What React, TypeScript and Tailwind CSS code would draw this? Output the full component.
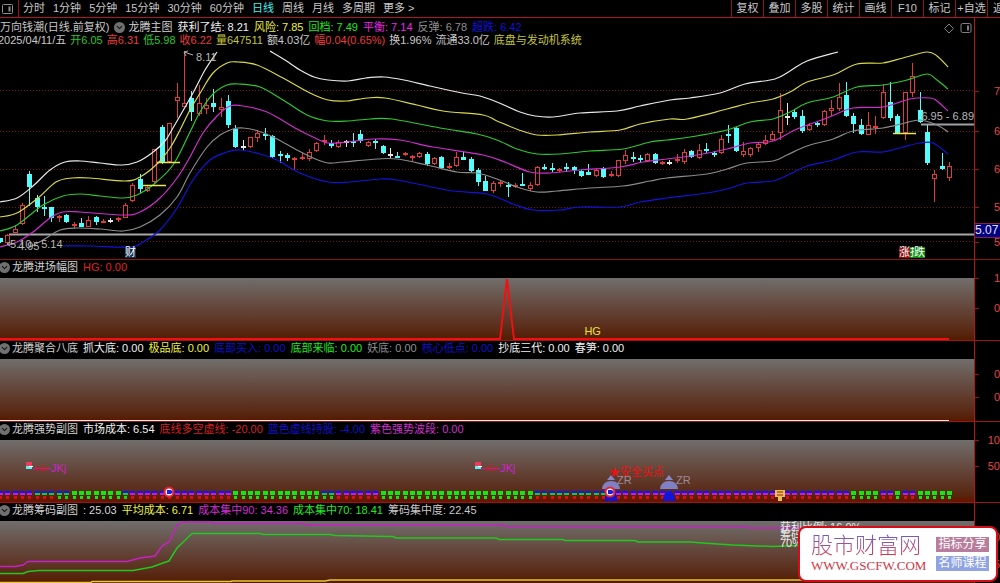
import { useState } from "react";
import { FiChevronDown } from "react-icons/fi";

type Point = [number, number];
// colour, high, body top, body bottom, low
type Candle = [string, number, number, number, number];

interface Item {
    text: string;
    color: string;
}

interface Tick {
    text: string;
    top: number;
}

const periods = ["分时", "1分钟", "5分钟", "15分钟", "30分钟", "60分钟", "日线", "周线", "月线", "多周期", "更多 >"];
const tools = ["复权", "叠加", "多股", "统计", "画线", "F10", "标记", "+自选"];

const STEP = 7.356;

const colors: Record<string, string> = { r: "#e03c3c", c: "#54fcfc", w: "#e8e8e8" };

const candles: Candle[] = [
    ["c", 238, 238, 242, 243], ["r", 234, 235, 243, 244], ["r", 225, 229, 233, 233], ["r", 203, 205, 224, 225],
    ["c", 171, 174, 187, 206], ["c", 195, 198, 207, 212], ["c", 196, 207, 208, 216], ["c", 207, 207, 218, 222],
    ["r", 215, 216, 218, 222], ["c", 214, 215, 222, 223], ["r", 222, 224, 226, 228], ["c", 218, 223, 227, 227],
    ["r", 216, 220, 227, 227], ["c", 216, 217, 222, 225], ["r", 219, 221, 223, 223], ["w", 218, 220, 221, 223],
    ["r", 217, 218, 220, 222], ["r", 203, 205, 218, 218], ["r", 183, 185, 201, 202], ["c", 174, 179, 189, 193],
    ["r", 186, 187, 191, 192], ["r", 149, 149, 182, 183], ["c", 125, 127, 162, 164], ["r", 123, 123, 162, 163],
    ["r", 83, 97, 101, 118], ["r", 51, 103, 107, 107], ["c", 91, 98, 112, 121], ["r", 85, 103, 114, 116],
    ["r", 98, 105, 109, 114], ["c", 89, 103, 107, 112], ["r", 98, 107, 110, 117], ["c", 95, 101, 125, 128],
    ["c", 125, 129, 147, 148], ["w", 140, 146, 147, 150], ["r", 137, 137, 147, 148], ["r", 130, 133, 138, 142],
    ["c", 128, 134, 135, 140], ["c", 135, 136, 157, 158], ["c", 151, 154, 156, 163], ["c", 153, 155, 158, 161],
    ["r", 157, 158, 160, 170], ["r", 153, 157, 159, 160], ["r", 149, 152, 159, 161], ["r", 142, 143, 151, 152],
    ["r", 135, 140, 142, 145], ["c", 140, 143, 146, 148], ["r", 140, 142, 147, 148], ["w", 140, 141, 142, 147],
    ["c", 133, 141, 143, 147], ["c", 130, 134, 141, 143], ["r", 141, 142, 146, 147], ["c", 139, 141, 143, 149],
    ["c", 145, 146, 153, 154], ["w", 148, 154, 155, 158], ["c", 152, 156, 157, 158], ["r", 152, 153, 155, 156],
    ["r", 155, 156, 158, 162], ["r", 152, 153, 157, 158], ["c", 152, 154, 164, 166], ["r", 157, 158, 164, 165],
    ["c", 156, 157, 168, 169], ["r", 163, 166, 168, 169], ["r", 152, 157, 166, 167], ["c", 152, 157, 160, 160],
    ["c", 157, 159, 171, 172], ["c", 168, 170, 182, 186], ["c", 176, 181, 191, 191], ["r", 181, 183, 191, 193],
    ["r", 180, 182, 184, 187], ["c", 182, 185, 187, 197], ["r", 183, 185, 186, 188], ["c", 173, 184, 186, 186],
    ["r", 182, 185, 189, 191], ["r", 166, 167, 185, 186], ["c", 164, 167, 169, 170], ["c", 163, 168, 170, 172],
    ["r", 168, 169, 171, 172], ["c", 163, 167, 169, 171], ["c", 166, 167, 170, 174], ["c", 170, 171, 176, 177],
    ["c", 164, 172, 175, 175], ["r", 169, 170, 176, 177], ["c", 167, 168, 177, 178], ["r", 171, 174, 176, 177],
    ["r", 160, 160, 176, 177], ["r", 150, 155, 161, 164], ["c", 152, 157, 158, 162], ["c", 155, 158, 159, 162],
    ["r", 153, 154, 161, 162], ["c", 153, 154, 163, 164], ["r", 161, 162, 164, 165], ["w", 160, 162, 163, 165],
    ["r", 154, 159, 161, 163], ["r", 149, 152, 162, 164], ["c", 150, 151, 157, 158], ["r", 144, 150, 158, 159],
    ["c", 143, 149, 150, 153], ["c", 151, 153, 154, 157], ["r", 135, 139, 153, 154], ["c", 125, 134, 135, 143],
    ["c", 127, 128, 151, 152], ["r", 142, 151, 155, 157], ["r", 147, 148, 155, 157], ["r", 142, 144, 148, 152],
    ["r", 135, 140, 144, 145], ["r", 131, 134, 140, 141], ["r", 93, 110, 133, 140], ["w", 103, 116, 117, 125],
    ["c", 109, 112, 117, 119], ["c", 110, 116, 131, 133], ["r", 123, 125, 130, 131], ["c", 122, 123, 125, 127],
    ["r", 110, 111, 125, 126], ["r", 100, 108, 111, 116], ["r", 83, 97, 109, 111], ["c", 82, 95, 116, 117],
    ["c", 113, 116, 124, 133], ["c", 119, 125, 134, 135], ["r", 112, 125, 135, 135], ["r", 116, 126, 128, 134],
    ["r", 84, 92, 118, 119], ["c", 82, 102, 118, 121], ["c", 114, 116, 133, 134], ["r", 92, 92, 133, 140],
    ["r", 63, 76, 93, 97], ["c", 92, 110, 122, 123], ["c", 125, 132, 163, 165], ["r", 170, 174, 179, 202],
    ["c", 153, 166, 169, 170], ["r", 162, 166, 178, 181],
];

const bands: { color: string; points: Point[] }[] = [
    {
        color: "#e8e8e8",
        points: [[0, 202], [17, 198], [33, 186], [50, 170], [65, 162], [80, 161], [100, 163], [122, 165], [137, 162], [152, 153], [165, 141], [173, 128], [193, 93], [205, 70], [217, 52]],
    },
    {
        color: "#e8e8e8",
        points: [[270, 51], [285, 60], [300, 70], [314, 77], [328, 80], [348, 81], [366, 78], [384, 77], [404, 80], [430, 86], [462, 93], [480, 96], [497, 102], [520, 112], [535, 116], [553, 117], [580, 113], [617, 111], [640, 106], [670, 100], [690, 98], [720, 93], [745, 84], [775, 79], [790, 71], [807, 61], [838, 52]],
    },
    {
        color: "#d8d84a",
        points: [[0, 217], [17, 213], [38, 198], [56, 182], [72, 178], [90, 178], [125, 181], [140, 177], [157, 164], [170, 148], [180, 130], [190, 110], [202, 90], [213, 73], [227, 63], [238, 62], [257, 65], [283, 78], [310, 93], [328, 100], [347, 101], [367, 98], [385, 98], [417, 105], [443, 111], [483, 115], [497, 121], [522, 131], [537, 135], [557, 135], [590, 132], [620, 130], [640, 124], [670, 119], [687, 119], [727, 109], [750, 103], [773, 99], [790, 92], [807, 82], [833, 75], [857, 64], [883, 63], [903, 58], [927, 52], [937, 56], [948, 67]],
    },
    {
        color: "#2fc82f",
        points: [[0, 231], [17, 225], [43, 205], [63, 196], [80, 194], [100, 196], [123, 198], [137, 195], [153, 185], [173, 165], [190, 132], [200, 112], [213, 94], [227, 85], [238, 84], [260, 87], [283, 100], [307, 115], [328, 121], [348, 121], [370, 119], [392, 119], [440, 128], [477, 134], [497, 140], [517, 149], [537, 154], [560, 154], [590, 151], [623, 149], [650, 142], [667, 140], [690, 137], [727, 130], [750, 122], [773, 119], [790, 112], [807, 103], [833, 97], [857, 87], [883, 85], [907, 80], [927, 74], [937, 80], [948, 89]],
    },
    {
        color: "#d02fd0",
        points: [[0, 247], [17, 242], [33, 232], [50, 218], [63, 212], [80, 212], [123, 215], [140, 212], [160, 198], [177, 178], [190, 157], [203, 133], [217, 116], [230, 106], [243, 106], [267, 112], [297, 129], [313, 137], [328, 143], [347, 142], [373, 139], [400, 140], [433, 147], [483, 155], [507, 163], [530, 172], [550, 173], [580, 170], [620, 167], [643, 162], [667, 159], [697, 155], [727, 149], [750, 143], [773, 141], [797, 129], [827, 118], [853, 108], [883, 107], [910, 99], [930, 98], [937, 101], [948, 111]],
    },
    {
        color: "#8a8a8a",
        points: [[30, 247], [43, 240], [60, 230], [77, 228], [100, 229], [123, 231], [140, 227], [160, 215], [177, 197], [190, 173], [207, 147], [220, 135], [233, 129], [243, 128], [255, 130], [273, 137], [297, 150], [313, 158], [328, 163], [343, 162], [377, 159], [397, 159], [427, 165], [457, 172], [477, 173], [497, 179], [517, 187], [537, 192], [557, 191], [590, 188], [623, 186], [650, 181], [667, 178], [707, 174], [727, 169], [747, 163], [773, 161], [787, 155], [807, 146], [833, 139], [853, 131], [883, 128], [905, 123], [920, 120], [937, 125], [948, 132]],
    },
    {
        color: "#1414d8",
        points: [[63, 246], [90, 246], [130, 247], [143, 242], [160, 230], [177, 208], [193, 180], [210, 160], [227, 152], [240, 150], [260, 154], [277, 160], [300, 173], [328, 182], [350, 182], [380, 179], [397, 180], [427, 186], [453, 191], [487, 194], [513, 204], [533, 210], [560, 210], [580, 207], [620, 207], [640, 202], [667, 198], [707, 193], [727, 189], [747, 183], [773, 181], [790, 174], [807, 166], [833, 160], [857, 152], [883, 152], [903, 147], [920, 143], [933, 143], [948, 154]],
    },
];

const quoteTop: Item[] = [
    { text: "获利了结: 8.21", color: "text-[#f0f0f0]" },
    { text: "风险: 7.85", color: "text-[#f0f040]" },
    { text: "回档: 7.49", color: "text-[#20e820]" },
    { text: "平衡: 7.14", color: "text-[#e828e8]" },
    { text: "反弹: 6.78", color: "text-[#909090]" },
    { text: "超跌: 6.42", color: "text-[#1010d8]" },
];

const quoteBottom: Item[] = [
    { text: "2025/04/11/五", color: "text-[#c8c8c8]" },
    { text: "开6.05", color: "text-[#28c828]" },
    { text: "高6.31", color: "text-[#e83c3c]" },
    { text: "低5.98", color: "text-[#28c828]" },
    { text: "收6.22", color: "text-[#e83c3c]" },
    { text: "量647511", color: "text-[#c4c43c]" },
    { text: "额4.03亿", color: "text-[#c8c8c8]" },
    { text: "幅0.04(0.65%)", color: "text-[#e83c3c]" },
    { text: "换1.96%", color: "text-[#c8c8c8]" },
    { text: "流通33.0亿", color: "text-[#c8c8c8]" },
    { text: "底盘与发动机系统", color: "text-[#c4c43c]" },
];

const bottomItems: Item[] = [
    { text: "抓大底: 0.00", color: "text-[#f0f0f0]" },
    { text: "极品底: 0.00", color: "text-[#f0f040]" },
    { text: "底部买入: 0.00", color: "text-[#1010c8]" },
    { text: "底部来临: 0.00", color: "text-[#20e820]" },
    { text: "妖底: 0.00", color: "text-[#909090]" },
    { text: "核心低点: 0.00", color: "text-[#1010c8]" },
    { text: "抄底三代: 0.00", color: "text-[#f0f0f0]" },
    { text: "春笋: 0.00", color: "text-[#f0f0f0]" },
];

const strongItems: Item[] = [
    { text: "市场成本: 6.54", color: "text-[#f0f0f0]" },
    { text: "底线多空虚线: -20.00", color: "text-[#d82020]" },
    { text: "蓝色虚线持股: -4.00", color: "text-[#1010c8]" },
    { text: "紫色强势波段: 0.00", color: "text-[#d030d0]" },
];

const chipItems: Item[] = [
    { text: ": 25.03", color: "text-[#d8d8d8]" },
    { text: "平均成本: 6.71", color: "text-[#f0f040]" },
    { text: "成本集中90: 34.36", color: "text-[#d030d0]" },
    { text: "成本集中70: 18.41", color: "text-[#20e820]" },
    { text: "筹码集中度: 22.45", color: "text-[#c8c8c8]" },
];

// m = magenta over red, g = green over red, h = blue over green, G = green
const signals = (
    "mmmmmgggh" + "hGGGGGGGh" + "mmmmmmmmmmmmmm" + "GGGGGGGGGGGG" + "hhmmmmmm" +
    "GGGGGGGGGGGGGGGGGGGGG" + "ggggggggggg" + "mmmmmmmmmmmmmmmmmmmmmmmmmmmmmmmm" + "GGGGmmGmmGGGGG"
).split("");

// Catmull-Rom spline through the points
const smooth = (p: Point[]) => {
    let d = `M${p[0][0]} ${p[0][1]}`;
    for (let i = 0; i < p.length - 1; i++) {
        const a = p[i - 1] || p[i];
        const b = p[i];
        const c = p[i + 1];
        const e = p[i + 2] || c;
        d += `C${b[0] + (c[0] - a[0]) / 6} ${b[1] + (c[1] - a[1]) / 6} ${c[0] - (e[0] - b[0]) / 6} ${c[1] - (e[1] - b[1]) / 6} ${c[0]} ${c[1]}`;
    }
    return d;
};

const Chevron = () => (
    <button type="button" aria-label="指标菜单" className="flex size-[11px] shrink-0 items-center justify-center rounded-full bg-[#707070] text-[#181818]">
        <FiChevronDown size={9} strokeWidth={3} />
    </button>
);

const Items = ({ items }: { items: Item[] }) => (
    <>
        {items.map((item) => (
            <span key={item.text} className={item.color}>{item.text}</span>
        ))}
    </>
);

const Axis = ({ ticks, tag }: { ticks: Tick[]; tag?: Tick }) => (
    <div className="relative w-[26px] shrink-0 overflow-hidden border-l border-[#b01818] text-[#e04848]">
        {ticks.map((t) => (
            <div key={t.top} className="absolute inset-x-0 flex h-3 items-center justify-between" style={{ top: t.top - 6 }}>
                <i className="h-px w-1 bg-[#901818]" />
                <span>{t.text}</span>
            </div>
        ))}
        {tag && (
            <div className="absolute inset-x-0 h-[15px] border-y border-[#8c1c50] bg-[#000084] text-[12px] leading-[13px] text-[#e0e0e0]" style={{ top: tag.top - 7 }}>
                {tag.text}
            </div>
        )}
    </div>
);

interface PanelProps {
    title: string;
    items: Item[];
    ticks: Tick[];
    children: React.ReactNode;
}

const Panel = ({ title, items, ticks, children }: PanelProps) => (
    <section className="flex border-b border-[#a01414]">
        <div className="min-w-0 flex-1">
            <header className="flex h-[18px] items-center gap-[5px] overflow-hidden pb-[3px]">
                <div className="-ml-px flex items-center gap-0.5">
                    <Chevron />
                    <h2 className="text-[#d0d0d0]">{title}</h2>
                </div>
                <Items items={items} />
            </header>
            <div className="relative h-[62px] overflow-hidden bg-linear-to-b from-[#706e6c] via-[#634438] to-[#541b00]">{children}</div>
        </div>
        <Axis ticks={ticks} />
    </section>
);

const MainChart = () => (
    <div className="relative h-[213px] overflow-hidden">
        <svg viewBox="0 46 974 213" preserveAspectRatio="none" className="block h-full w-full">
            {[90, 131, 169, 207, 241].map((y) => (
                <path key={y} d={`M0 ${y + 0.5}H974`} stroke="#781818" strokeDasharray="1 2" />
            ))}
            <path d="M9 234.500H974" stroke="#a8a8a8" strokeWidth="2" />
            <path d="M921 124.500H974" stroke="#a0a0a0" strokeWidth="2" />
            {candles.map(([kind, high, top, bottom, low], i) => {
                const x = Math.round(i * STEP);
                const color = colors[kind];
                return (
                    <g key={i} stroke={color} shapeRendering="crispEdges">
                        <path d={`M${x + 0.5} ${high}V${top}M${x + 0.5} ${bottom}V${low}`} />
                        <rect
                            x={x - 1.5}
                            y={top + 0.5}
                            width="4"
                            height={Math.max(bottom - top - 1, 0.5)}
                            fill={kind === "r" ? "#000" : color}
                        />
                    </g>
                );
            })}
            {bands.map((b, i) => (
                <path key={i} d={smooth(b.points)} fill="none" stroke={b.color} strokeWidth="1.2" />
            ))}
            <path d="M143 185.500H166M157 162.500H180M893 133.500H916" stroke="#e8e850" strokeWidth="1.500" />
            <path d="M193 55L184 52M184 52l4 -1M184 52l2 4" stroke="#b0b0b0" fill="none" />
            <path d="M14 244H7l3 -2M7 244l3 2" stroke="#b0b0b0" fill="none" />
        </svg>
        <span className="absolute left-[196px] top-[5px] leading-3 text-[#b8b8b8]">8.11</span>
        <span className="absolute left-[10px] top-[192px] leading-3 text-[#b8b8b8]">5.10 - 5.14</span>
        <span className="absolute left-[18px] top-[194px] leading-3 text-[#b8b8b8]">4.95</span>
        <span className="absolute right-0 top-[64px] leading-3 text-[#b8b8b8]">6.95 - 6.89</span>
        <span className="absolute left-[125px] top-[201px] bg-[#102c50] leading-[11px] text-white">财</span>
        <div className="absolute right-[49px] top-[201px] flex leading-[11px] text-white">
            <span className="bg-[#901010]">涨</span>
            <span className="w-1 overflow-hidden bg-[#0c8c0c]">报</span>
            <span className="bg-[#0c8c0c]">跌</span>
        </div>
    </div>
);

const Flag = ({ x }: { x: number }) => (
    <g>
        <path d={`M${x} 462h6v4h-6z`} fill="#f03c5c" />
        <path d={`M${x} 466h6v3h-6z`} fill="#60f0f8" />
        <path d={`M${x + 3} 466h4v1h-4z`} fill="#fff" />
        <path d={`M${x + 7} 468.500h18`} stroke="#c818b0" />
        <path d={`M${x + 11} 465v6m3 -5v5m3 -6v7m4 -6v5`} stroke="#d81818" />
    </g>
);

const Target = ({ x }: { x: number }) => (
    <g>
        <circle cx={x} cy="492" r="4.500" fill="#f0f0ff" stroke="#e82030" strokeWidth="2" />
        <path d={`M${x - 2} 490h4l2 2l-2 2h-4z`} fill="#2020d8" />
    </g>
);

const Dome = ({ x }: { x: number }) => (
    <g>
        <path d={`M${x} 475l4 5h-8z`} fill="#8888c8" />
        <path d={`M${x - 9} 489q1 -8 9 -8t9 8z`} fill="#8080c4" />
        <path d={`M${x - 4} 493h8l3 8h-14z`} fill="#1414d8" />
    </g>
);

const StrongChart = () => (
    <>
        <svg viewBox="0 440 974 62" preserveAspectRatio="none" className="block h-full w-full">
            <path d="M0 500H974" stroke="#6c1400" strokeWidth="3" />
            {signals.slice(0, 130).map((s, i) => {
                const x = Math.round(i * STEP);
                if (s === "G") {
                    return <path key={i} d={`M${x - 2} 491h5v4h-5zM${x - 1} 496h3v3h-3z`} fill="#10e810" />;
                }
                return (
                    <g key={i} shapeRendering="crispEdges">
                        <path d={`M${x - 3} 491h6v2h-6z`} fill="#1414f8" />
                        <path d={`M${x - 2} 493h5v2h-5z`} fill={s === "m" ? "#d818d8" : "#10d810"} />
                        <path d={`M${x - 1} 496h3v3h-3z`} fill={s === "h" ? "#10d810" : "#d81010"} />
                    </g>
                );
            })}
            <Flag x={26} />
            <Flag x={475} />
            <Dome x={611} />
            <Dome x={669} />
            <Target x={169} />
            <Target x={610} />
            <path d="M775 490h10v7h-3v4h-4v-4h-3z" fill="#e8c050" />
            <path d="M777 492h6M777 495h6" stroke="#a01820" />
        </svg>
        <span className="absolute left-[51px] top-[22px] leading-3 text-[#d020d0]">JKj</span>
        <span className="absolute left-[500px] top-[22px] leading-3 text-[#d020d0]">JKj</span>
        <span className="absolute left-[609px] top-[26px] leading-3 text-[#f01010]">★安全买点</span>
        <span className="absolute left-[617px] top-[34px] leading-3 text-[#9c8c98]">ZR</span>
        <span className="absolute left-[676px] top-[34px] leading-3 text-[#9c8c98]">ZR</span>
    </>
);

const ChipChart = () => (
    <>
        <svg viewBox="0 521 974 62" preserveAspectRatio="none" className="block h-full w-full" fill="none">
            <path
                d="M0 566.500H15L23 565L28 561.500H127L140 558L155 556L162 546L169 542L177 525L183 522H210L213 523.500H303L307 525H502L507 526.500H747L749 528H974"
                stroke="#c820c8"
                strokeWidth="1.500"
            />
            <path
                d="M0 573.500H23L28 571.500L39 570.500H133L152 567L163 563L169 561L177 548L192 533.500H260L263 534.500H330L335 535.500L393 536.500L396 538H496L499 539.500H563L565 540.500H635L638 542H690L703 543L733 545L773 546.500L797 545.500H974"
                stroke="#20c820"
                strokeWidth="1.500"
            />
            <path d="M0 582.500H91L92 581.500H231L232 581H325L330 580H974" stroke="#e8c830" strokeWidth="1.500" />
        </svg>
        <div className="absolute left-[780px] top-0 flex flex-col pt-0.5 leading-2 text-[#e8e8e8]">
            <span>获利比例: 16.9%</span>
            <span>筹码</span>
            <span>70%成本</span>
        </div>
    </>
);

const App = () => {
    const [period, setPeriod] = useState("日线");

    return (
        <div className="relative min-h-screen w-full overflow-hidden bg-black font-['Liberation_Sans','Noto_Sans_CJK_SC',sans-serif] text-[11px] leading-[13px] whitespace-nowrap">
            {/* Toolbar */}
            <nav className="flex h-[18px] items-stretch justify-between overflow-hidden border-b border-[#b01818] text-[#c8c8c8]">
                <div className="flex items-center gap-2">
                    <button type="button" aria-label="侧栏" className="-mr-1 flex h-full items-center border-r border-[#901414] pr-1 pl-0.5">
                        <svg viewBox="0 0 12 12" className="size-3" fill="none" stroke="#909090">
                            <rect x="0.500" y="1.500" width="10" height="9" rx="1" />
                            <path d="M7.500 3.500v5" strokeWidth="2" />
                        </svg>
                    </button>
                    {periods.map((p) => (
                        <button
                            key={p}
                            type="button"
                            onClick={() => setPeriod(p)}
                            className={p === period ? "text-[#40f0f0]" : "text-[#c8c8c8]"}
                        >
                            {p}
                        </button>
                    ))}
                </div>
                <div className="flex">
                    {tools.map((t) => (
                        <button key={t} type="button" className="w-8 shrink-0 border-l border-[#901414]">
                            {t}
                        </button>
                    ))}
                    <button type="button" className="w-[13px] overflow-hidden border-l border-[#901414] pl-[5px] text-left">
                        返
                    </button>
                </div>
            </nav>

            {/* Price chart */}
            <section className="flex border-b border-[#901414]">
                <div className="min-w-0 flex-1">
                    <header className="flex h-7 flex-col justify-center">
                        <div className="flex items-center gap-[5px] pt-1">
                            <h1 className="text-[#c8c8c8]">万向钱潮(日线.前复权)</h1>
                            <div className="flex items-center gap-[3px]">
                                <Chevron />
                                <h2 className="text-[#d0d0d0]">龙腾主图</h2>
                            </div>
                            <Items items={quoteTop} />
                            <svg viewBox="0 0 30 12" className="mr-px ml-auto h-3 w-[30px]" fill="none" stroke="#808080">
                                <path d="M6 2L10.500 6.500L6 11L1.500 6.500Z" />
                                <rect x="18" y="1.500" width="10" height="9" rx="1.500" />
                                <path d="M25 3.500v5" strokeWidth="2" />
                            </svg>
                        </div>
                        <div className="-ml-0.5 flex gap-1">
                            <Items items={quoteBottom} />
                        </div>
                    </header>
                    <MainChart />
                </div>
                <Axis
                    ticks={[
                        { text: "7", top: 73 },
                        { text: "6", top: 113 },
                        { text: "6", top: 151 },
                        { text: "5", top: 189 },
                        { text: "5", top: 224 },
                    ]}
                    tag={{ text: "5.07", top: 212 }}
                />
            </section>

            <Panel title="龙腾进场幅图" items={[{ text: "HG: 0.00", color: "text-[#e02020]" }]} ticks={[{ text: "1", top: 18 }, { text: "0", top: 48 }]}>
                <svg viewBox="0 278 974 62" preserveAspectRatio="none" className="block h-full w-full" fill="none">
                    <path d="M0 339H500L507 279L514 339H949" stroke="#f01010" strokeWidth="2" />
                </svg>
                <span className="absolute left-[60%] top-[47px] leading-3 text-[#e8e040]">HG</span>
            </Panel>

            <Panel title="龙腾聚合八底" items={bottomItems} ticks={[{ text: "0", top: 33 }, { text: "0", top: 56 }]}>
                <svg viewBox="0 359 974 62" preserveAspectRatio="none" className="block h-full w-full">
                    <path d="M0 420.500H949" stroke="#f0f0f0" />
                </svg>
            </Panel>

            <Panel title="龙腾强势副图" items={strongItems} ticks={[{ text: "10", top: 18 }, { text: "50", top: 44 }]}>
                <StrongChart />
            </Panel>

            <Panel title="龙腾筹码副图" items={chipItems} ticks={[{ text: "0", top: 34 }, { text: "5", top: 61 }]}>
                <ChipChart />
            </Panel>

            {/* Site badge */}
            <a href="#home" className="absolute right-0.5 bottom-0.5 flex h-14 w-[200px] items-center justify-between rounded-lg border-2 border-[#d80c18] bg-white pr-[7px] pl-[11px]">
                <span className="flex flex-col">
                    <span className="bg-linear-to-b from-[#7058c8] to-[#d82838] bg-clip-text text-[22px] leading-6 font-light text-transparent">股市财富网</span>
                    <span className="font-['Liberation_Serif',serif] text-[13px] leading-4 text-[#d03848]">WWW.GSCFW.COM</span>
                </span>
                <span className="flex flex-col gap-1 text-center text-[12px] leading-[15px] text-white">
                    <span className="w-[53px] bg-[#b87c9c]">指标分享</span>
                    <span className="w-[53px] bg-[#90a4e4]">名师课程</span>
                </span>
            </a>
        </div>
    );
};

export default App;
